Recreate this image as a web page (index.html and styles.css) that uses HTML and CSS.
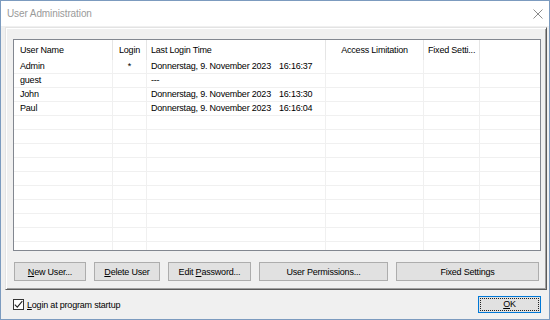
FILE: index.html
```html
<!DOCTYPE html>
<html lang="en">
<head>
    <meta charset="UTF-8">
    <meta name="viewport" content="width=device-width, initial-scale=1.0">
    <title>User Administration</title>
    <link rel="stylesheet" href="styles.css">
</head>
<body>
    <div class="window">
        <div class="titlebar">
            <span class="title">User Administration</span>
            <svg class="close" width="10" height="10" viewBox="0 0 10 10">
                <path d="M0.5 0.5 L9.5 9.5 M9.5 0.5 L0.5 9.5" stroke="#8c8c8c" stroke-width="1" fill="none"/>
            </svg>
        </div>

        <div class="client">
            <div class="frame">
                <div class="list">
                    <div class="row head">
                        <div class="cell">User Name</div>
                        <div class="cell center">Login</div>
                        <div class="cell">Last Login Time</div>
                        <div class="cell center">Access Limitation</div>
                        <div class="cell">Fixed Setti...</div>
                        <div class="cell last"></div>
                    </div>
                    <div class="row">
                        <div class="cell">Admin</div>
                        <div class="cell center">*</div>
                        <div class="cell"><span class="date">Donnerstag, 9. November 2023</span>16:16:37</div>
                        <div class="cell"></div>
                        <div class="cell"></div>
                        <div class="cell last"></div>
                    </div>
                    <div class="row">
                        <div class="cell">guest</div>
                        <div class="cell"></div>
                        <div class="cell">---</div>
                        <div class="cell"></div>
                        <div class="cell"></div>
                        <div class="cell last"></div>
                    </div>
                    <div class="row">
                        <div class="cell">John</div>
                        <div class="cell"></div>
                        <div class="cell"><span class="date">Donnerstag, 9. November 2023</span>16:13:30</div>
                        <div class="cell"></div>
                        <div class="cell"></div>
                        <div class="cell last"></div>
                    </div>
                    <div class="row">
                        <div class="cell">Paul</div>
                        <div class="cell"></div>
                        <div class="cell"><span class="date">Donnerstag, 9. November 2023</span>16:16:04</div>
                        <div class="cell"></div>
                        <div class="cell"></div>
                        <div class="cell last"></div>
                    </div>
                    <!-- empty rows to fill the list -->
                    <div class="row"><div class="cell"></div><div class="cell"></div><div class="cell"></div><div class="cell"></div><div class="cell"></div><div class="cell last"></div></div>
                    <div class="row"><div class="cell"></div><div class="cell"></div><div class="cell"></div><div class="cell"></div><div class="cell"></div><div class="cell last"></div></div>
                    <div class="row"><div class="cell"></div><div class="cell"></div><div class="cell"></div><div class="cell"></div><div class="cell"></div><div class="cell last"></div></div>
                    <div class="row"><div class="cell"></div><div class="cell"></div><div class="cell"></div><div class="cell"></div><div class="cell"></div><div class="cell last"></div></div>
                    <div class="row"><div class="cell"></div><div class="cell"></div><div class="cell"></div><div class="cell"></div><div class="cell"></div><div class="cell last"></div></div>
                    <div class="row"><div class="cell"></div><div class="cell"></div><div class="cell"></div><div class="cell"></div><div class="cell"></div><div class="cell last"></div></div>
                    <div class="row"><div class="cell"></div><div class="cell"></div><div class="cell"></div><div class="cell"></div><div class="cell"></div><div class="cell last"></div></div>
                    <div class="row"><div class="cell"></div><div class="cell"></div><div class="cell"></div><div class="cell"></div><div class="cell"></div><div class="cell last"></div></div>
                    <div class="row"><div class="cell"></div><div class="cell"></div><div class="cell"></div><div class="cell"></div><div class="cell"></div><div class="cell last"></div></div>
                    <div class="row"><div class="cell"></div><div class="cell"></div><div class="cell"></div><div class="cell"></div><div class="cell"></div><div class="cell last"></div></div>
                </div>

                <div class="buttons">
                    <button class="btn w-new"><u>N</u>ew User...</button>
                    <button class="btn w-delete"><u>D</u>elete User</button>
                    <button class="btn w-edit">Edit <u>P</u>assword...</button>
                    <button class="btn w-perm">User Permissions...</button>
                    <button class="btn w-fixed">Fixed Settings</button>
                </div>
            </div>

            <div class="bottom">
                <label class="check">
                    <span class="box">
                        <svg width="9" height="9" viewBox="0 0 9 9">
                            <path d="M0.8 4.6 L3.3 7.2 L8.3 1.2" stroke="#222" stroke-width="1.1" fill="none"/>
                        </svg>
                    </span>
                    <span><u>L</u>ogin at program startup</span>
                </label>
                <button class="btn ok"><span class="focus"><u>O</u>K</span></button>
            </div>
        </div>
    </div>
</body>
</html>
```

FILE: styles.css
```css
* {
    margin: 0;
    padding: 0;
    box-sizing: border-box;
}

body {
    font-family: 'Liberation Sans', Arial, sans-serif;
    font-size: 9px;
    letter-spacing: -0.2px;
    color: #000;
    background: #f0f0f0;
}

.window {
    width: 550px;
    height: 320px;
    border: 1px solid #7c9bbf;
    display: flex;
    flex-direction: column;
    background: #f0f0f0;
}

.titlebar {
    height: 25px;
    background: #fff;
    display: flex;
    align-items: center;
    justify-content: space-between;
    padding: 0 6px 0 6px;
}

.title {
    font-size: 10px;
    letter-spacing: -0.1px;
    color: #9a9a9a;
}

.close {
    display: block;
    margin-top: 1px;
}

.client {
    flex: 1;
    display: flex;
    flex-direction: column;
    padding: 1px 2px 0 4px;
}

.frame {
    height: 263px;
    border-top: 1px solid #e3e3e3;
    border-left: 1px solid #e3e3e3;
    border-right: 1px solid #5a5a5a;
    border-bottom: 1px solid #5a5a5a;
    box-shadow: inset 1px 1px 0 #fff, inset -1px -1px 0 #a0a0a0;
    padding: 11px 5px 8px 7px;
}

.list {
    height: 212px;
    background: #fff;
    border: 1px solid #828790;
    overflow: hidden;
}

.row {
    display: grid;
    grid-template-columns: 99px 34px 179px 98px 56px 1fr;
    height: 14px;
    border-bottom: 1px solid #f0f0f0;
}

.row.head {
    height: 20px;
    border-bottom: none;
}

.cell {
    border-right: 1px solid #f0f0f0;
    padding-left: 6px;
    white-space: nowrap;
    overflow: hidden;
    line-height: 13px;
}

.row.head .cell {
    border-right-color: #e5e5e5;
    line-height: 20px;
}

.cell:nth-child(3) {
    padding-left: 4px;
}

.cell:nth-child(5) {
    padding-left: 4px;
}

.cell.center {
    text-align: center;
    padding-left: 0;
}

.cell.last {
    border-right: none;
}

.date {
    margin-right: 8px;
}

.buttons {
    display: flex;
    gap: 8px;
    margin: 11px 0 0 1px;
}

.btn {
    font-family: inherit;
    font-size: 9px;
    letter-spacing: -0.2px;
    color: #000;
    background: #e1e1e1;
    border: 1px solid #adadad;
    height: 19px;
}

.w-new { width: 72px; }
.w-delete { width: 66px; }
.w-edit { width: 83px; }
.w-perm { width: 129px; }
.w-fixed { width: 143px; }

.bottom {
    flex: 1;
    display: flex;
    align-items: center;
    justify-content: space-between;
    padding: 0 6px 0 8px;
}

.check {
    display: flex;
    align-items: center;
    gap: 3px;
}

.box {
    width: 11px;
    height: 11px;
    border: 1px solid #333;
    background: #fff;
    display: flex;
    align-items: center;
    justify-content: center;
}

.box svg {
    display: block;
}

.ok {
    width: 63px;
    height: 17px;
    border: 1px solid #0078d7;
    padding: 1px;
}

.focus {
    display: block;
    height: 100%;
    border: 1px dotted #222;
    line-height: 11px;
}
```
